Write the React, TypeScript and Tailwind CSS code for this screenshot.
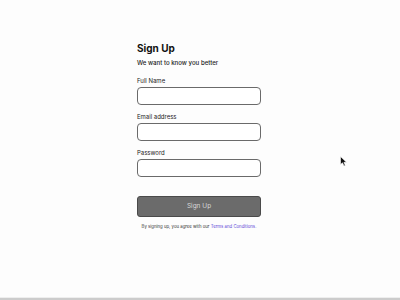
export default function App() {
  return (
    <div
      className="relative flex h-[300px] w-[400px] flex-col bg-[#fdfdfd]"
      style={{ fontFamily: 'Inter, "Liberation Sans", sans-serif' }}
    >
      <div className="flex flex-1 pl-[137px] pt-[41px]">
        <form className="flex w-[124px] flex-col">
          <h1 className="text-[10px] font-bold leading-[14px] text-[#111]">Sign Up</h1>
          <p className="mt-[3px] text-[6.1px] font-medium leading-[10px] text-[#222]">
            We want to know you better
          </p>

          <div className="mt-[8px] flex flex-col gap-[7px]">
            {['Full Name', 'Email address', 'Password'].map((label) => (
              <label key={label} className="flex flex-col gap-[1px]">
                <span className="text-[6px] leading-[10px] text-[#222]">{label}</span>
                <input
                  type={label === 'Password' ? 'password' : 'text'}
                  className="h-[18px] w-full rounded-[4px] border border-[#6a6a6a] bg-white outline-none"
                />
              </label>
            ))}
          </div>

          <button
            type="button"
            className="mt-[19px] h-[21px] w-full rounded-[3px] border border-[#4a4a4a] bg-[#6b6b6b] text-[6.5px] text-[#d8d8d8]"
          >
            Sign Up
          </button>

          <p className="mt-[6px] whitespace-nowrap text-center text-[4.3px] leading-[8px] text-[#333]">
            By signing up, you agree with our{' '}
            <span className="text-[#5a3fd6]">Terms and Conditions.</span>
          </p>
        </form>
      </div>

      <svg
        className="absolute left-[340px] top-[156px]"
        width="7"
        height="11"
        viewBox="0 0 7 11"
      >
        <path d="M0.5 0.5 L0.5 8.5 L2.5 6.8 L4 10 L5.3 9.4 L3.9 6.3 L6.5 6.3 Z" fill="#111" stroke="#fff" strokeWidth="0.6" />
      </svg>

      <div className="h-[3px] border-t border-[#eee] border-b-2 border-b-[#ccc]" />
    </div>
  );
}
